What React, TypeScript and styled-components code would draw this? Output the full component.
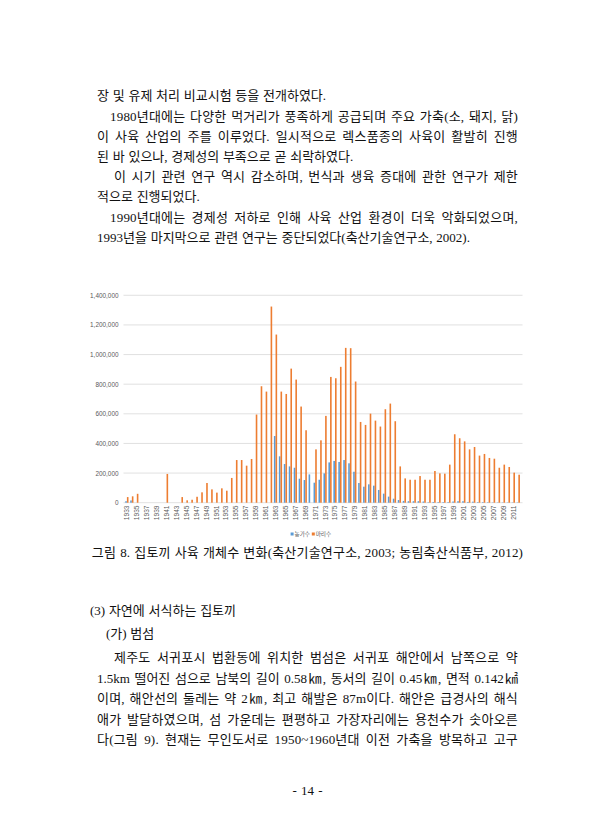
import React from 'react';
import styled, { createGlobalStyle } from 'styled-components';

const GlobalStyle = createGlobalStyle`
  html, body {
    margin: 0;
    padding: 0;
    background: #fff;
  }
`;

const Page = styled.div`
  width: 613px;
  min-height: 840px;
  background: #fff;
  color: #111;
  font-family: "Liberation Serif", "Noto Sans CJK KR", serif;
  font-size: 13px;
`;

const TextBlock = styled.div<{ $lh: number; $top?: number }>`
  padding: ${p => p.$top || 0}px 95px 0 97px;
  line-height: ${p => p.$lh}px;
`;

const Line = styled.div<{ $indent?: number; $justify?: boolean; $tight?: boolean }>`
  padding-left: ${p => p.$indent || 0}px;
  white-space: nowrap;
  text-align: ${p => (p.$justify ? 'justify' : 'left')};
  text-align-last: ${p => (p.$justify ? 'justify' : 'left')};
  letter-spacing: ${p => (p.$justify && !p.$tight ? 0.2 : 0)}px;
  word-spacing: ${p => (p.$justify ? 0 : 0.5)}px;
`;

const Figure = styled.div`
  display: block;
  height: 295px;
  svg {
    display: block;
  }
`;

const Caption = styled.div`
  line-height: 20px;
  text-align: center;
  white-space: nowrap;
  padding-left: 2px;
  letter-spacing: 0.2px;
  word-spacing: 0.5px;
`;

const Heading = styled.div<{ $left: number; $gap: number }>`
  line-height: 20px;
  margin-top: ${p => p.$gap}px;
  padding-left: ${p => p.$left}px;
  white-space: nowrap;
  word-spacing: 0.5px;
`;

const PageNumber = styled.div`
  margin-top: 30px;
  line-height: 20px;
  text-align: center;
  padding-left: 2px;
  word-spacing: 1px;
`;

// 1933 - 2012
const farms = [
  10000, 15000, 0, 0, 0, 0, 0, 0, 0, 0,
  0, 0, 0, 0, 0, 0, 0, 0, 0, 0,
  0, 0, 0, 0, 0, 0, 0, 0, 0, 0,
  450000, 313000, 261000, 245000, 236000, 162000, 153000, 191000, 135000, 155000,
  198000, 272000, 282000, 275000, 288000, 266000, 209000, 133000, 108000, 124000,
  115000, 86000, 61000, 41000, 27000, 18000, 12000, 10000, 10000, 10000,
  8000, 3000, 5000, 4000, 4000, 4000, 8000, 10000, 10000, 5000,
  7000, 4000, 4000, 3000, 2000, 2000, 2000, 2000, 2000, 2000,
];

const heads = [
  38000, 43000, 60000, 0, 0, 0, 0, 0, 194000, 0,
  0, 38000, 16000, 20000, 40000, 70000, 133000, 90000, 68000, 97000,
  81000, 167000, 288000, 288000, 250000, 295000, 595000, 786000, 750000, 1324000,
  1135000, 750000, 734000, 905000, 831000, 649000, 489000, 0, 360000, 421000,
  586000, 849000, 840000, 917000, 1045000, 1043000, 818000, 545000, 525000, 601000,
  554000, 514000, 631000, 669000, 550000, 245000, 164000, 155000, 155000, 180000,
  155000, 155000, 214000, 198000, 196000, 257000, 462000, 435000, 414000, 360000,
  376000, 318000, 329000, 302000, 297000, 236000, 257000, 241000, 203000, 189000,
];

const X0 = 124.4;
const CW = 4.955;
const ZERO = 501.7;
const STEP = 29.63; // px per 200,000
const scale = (v: number) => (v / 200000) * STEP;

function Chart() {
  const ticks = [0, 1, 2, 3, 4, 5, 6, 7];
  return (
    <svg width="613" height="295" viewBox="0 247 613 295">
      {ticks.map(k => (
        <line
          key={k}
          x1={123.5}
          x2={522.5}
          y1={ZERO - k * STEP}
          y2={ZERO - k * STEP}
          stroke="#d9d9d9"
          strokeWidth={0.8}
        />
      ))}
      {ticks.map(k => (
        <text
          key={k}
          x={118.5}
          y={ZERO - k * STEP}
          fontSize={6.4}
          fill="#595959"
          textAnchor="end"
          dominantBaseline="central"
          fontFamily="'Liberation Sans', Arial, sans-serif"
        >
          {k === 0 ? '0' : (k * 200000).toLocaleString('en-US')}
        </text>
      ))}
      {heads.map((h, i) => (
        <g key={i}>
          {farms[i] > 0 && (
            <rect
              x={X0 + i * CW + 0.85}
              y={ZERO - scale(farms[i])}
              width={1.6}
              height={scale(farms[i])}
              fill="#5b9bd5"
            />
          )}
          {h > 0 && (
            <rect
              x={X0 + i * CW + 2.5}
              y={ZERO - scale(h)}
              width={1.6}
              height={scale(h)}
              fill="#ed7d31"
            />
          )}
        </g>
      ))}
      {heads.map((_, i) => {
        if (i % 2) return null;
        const cx = X0 + (i + 0.5) * CW;
        return (
          <text
            key={i}
            x={cx}
            y={504.5}
            transform={`rotate(-90 ${cx} 504.5)`}
            fontSize={6.6}
            fill="#595959"
            textAnchor="end"
            dominantBaseline="central"
            fontFamily="'Liberation Sans', Arial, sans-serif"
          >
            {1933 + i}
          </text>
        );
      })}
      <g fontFamily="'Noto Sans CJK KR', sans-serif" fontSize={5.6} fill="#595959">
        <rect x={290.6} y={531.5} width={3} height={3} fill="#5b9bd5" />
        <text x={294.5} y={533} dominantBaseline="central">농가수</text>
        <rect x={311.8} y={531.5} width={3} height={3} fill="#ed7d31" />
        <text x={315.7} y={533} dominantBaseline="central">마리수</text>
      </g>
    </svg>
  );
}

export default function App() {
  return (
    <Page>
      <GlobalStyle />
      <TextBlock $lh={20.2} $top={86.4}>
        <Line>장 및 유제 처리 비교시험 등을 전개하였다.</Line>
        <Line $indent={13} $justify>1980년대에는 다양한 먹거리가 풍족하게 공급되며 주요 가축(소, 돼지, 닭)</Line>
        <Line $justify>이 사육 산업의 주를 이루었다. 일시적으로 렉스품종의 사육이 활발히 진행</Line>
        <Line>된 바 있으나, 경제성의 부족으로 곧 쇠락하였다.</Line>
        <Line $indent={17} $justify>이 시기 관련 연구 역시 감소하며, 번식과 생육 증대에 관한 연구가 제한</Line>
        <Line>적으로 진행되었다.</Line>
        <Line $indent={13} $justify>1990년대에는 경제성 저하로 인해 사육 산업 환경이 더욱 악화되었으며,</Line>
        <Line>1993년을 마지막으로 관련 연구는 중단되었다(축산기술연구소, 2002).</Line>
      </TextBlock>
      <Figure>
        <Chart />
      </Figure>
      <Caption>그림 8. 집토끼 사육 개체수 변화(축산기술연구소, 2003; 농림축산식품부, 2012)</Caption>
      <Heading $left={90} $gap={38}>(3) 자연에 서식하는 집토끼</Heading>
      <Heading $left={106} $gap={3}>(가) 범섬</Heading>
      <TextBlock $lh={20.6} $top={4}>
        <Line $indent={17} $justify>제주도 서귀포시 법환동에 위치한 범섬은 서귀포 해안에서 남쪽으로 약</Line>
        <Line $justify $tight>1.5km 떨어진 섬으로 남북의 길이 0.58㎞, 동서의 길이 0.45㎞, 면적 0.142㎢</Line>
        <Line $justify>이며, 해안선의 둘레는 약 2㎞, 최고 해발은 87m이다. 해안은 급경사의 해식</Line>
        <Line $justify>애가 발달하였으며, 섬 가운데는 편평하고 가장자리에는 용천수가 솟아오른</Line>
        <Line $justify>다(그림 9). 현재는 무인도서로 1950~1960년대 이전 가축을 방목하고 고구</Line>
      </TextBlock>
      <PageNumber>- 14 -</PageNumber>
    </Page>
  );
}
